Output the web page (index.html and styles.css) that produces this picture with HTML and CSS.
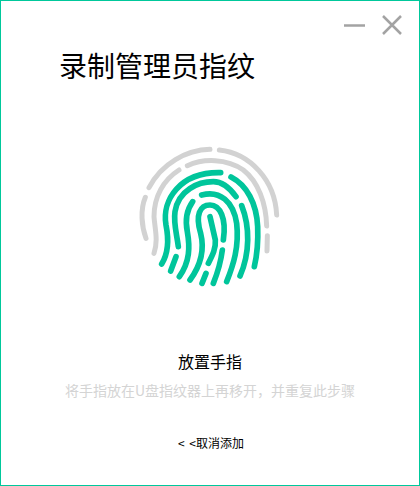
FILE: index.html
```html
<!DOCTYPE html>
<html lang="zh-CN">
<head>
    <meta charset="UTF-8">
    <title>录制管理员指纹</title>
    <link rel="stylesheet" href="styles.css">
</head>
<body>
    <div class="window">
        <div class="controls">
            <svg class="control" width="24" height="24" viewBox="0 0 24 24"><path d="M0 12.5H21" class="control-line"/></svg>
            <svg class="control" width="24" height="24" viewBox="0 0 24 24"><path d="M3 3L21 21M21 3L3 21" class="control-line"/></svg>
        </div>
        <h1 class="title">录制管理员指纹</h1>
        <svg class="print" width="160" height="160" viewBox="0 0 480 480">
            <g class="grey">
                <path d="M57 143C95 70 170 30 240 28"/>
                <path d="M268 30C360 40 435 120 440 225"/>
                <path d="M46 172C30 210 35 260 48 295"/>
                <path d="M72 340C85 300 75 270 72 230C72 170 100 120 147 90"/>
                <path d="M172 77C220 55 290 55 340 90C385 125 408 190 410 258"/>
                <path d="M412 287L411 333"/>
            </g>
            <g class="green">
                <path d="M95 372C118 335 115 290 108 255C95 180 150 95 272 98"/>
                <path d="M303 111C350 135 380 190 383 260C385 310 380 350 373 380"/>
                <path d="M145 320C140 280 130 250 135 215C145 150 205 125 250 125C275 125 300 145 318 170"/>
                <path d="M122 393L138 350"/>
                <path d="M148 410C180 365 180 320 172 275C165 240 170 210 188 185"/>
                <path d="M215 165C270 150 310 185 320 250C328 320 310 375 290 425"/>
                <path d="M335 197C360 260 360 340 330 408"/>
                <path d="M180 420C220 365 222 320 212 280C195 225 210 195 240 195C270 195 290 235 280 300"/>
                <path d="M240 230L256 300C258 325 248 345 235 370"/>
                <path d="M277 330C272 370 262 400 250 430"/>
                <path d="M216 430L228 400"/>
            </g>
        </svg>
        <p class="hint">放置手指</p>
        <p class="sub">将手指放在U盘指纹器上再移开，并重复此步骤</p>
        <a class="cancel">&lt; &lt;取消添加</a>
    </div>
</body>
</html>
```

FILE: styles.css
```css
* {
    margin: 0;
    padding: 0;
    box-sizing: border-box;
}

body {
    font-family: "Noto Sans CJK SC", "Liberation Sans", sans-serif;
    background-color: #fff;
}

.window {
    width: 420px;
    height: 486px;
    border: 1px solid #00c89b;
    display: flex;
    flex-direction: column;
    align-items: center;
    overflow: hidden;
}

.controls {
    align-self: flex-end;
    display: flex;
    gap: 12px;
    padding: 12px 15px 0 0;
}

.control-line {
    fill: none;
    stroke: #a3a3a3;
    stroke-width: 2.5;
}

.title {
    align-self: flex-start;
    margin: 7px 0 0 58px;
    font-size: 28px;
    line-height: 42px;
    font-weight: 400;
    color: #000;
}

.print {
    margin-top: 54px;
    fill: none;
    stroke-linecap: round;
}

.grey {
    stroke: #d2d2d2;
    stroke-width: 15;
}

.green {
    stroke: #00c59b;
    stroke-width: 17;
}

.hint {
    margin-top: 50px;
    font-size: 16px;
    line-height: 22px;
    color: #000;
}

.sub {
    margin-top: 8px;
    font-size: 14px;
    line-height: 20px;
    color: #d4d4d4;
}

.cancel {
    margin: 34px 0 0 2px;
    font-size: 12px;
    line-height: 18px;
    word-spacing: 2px;
    color: #000;
}
```
